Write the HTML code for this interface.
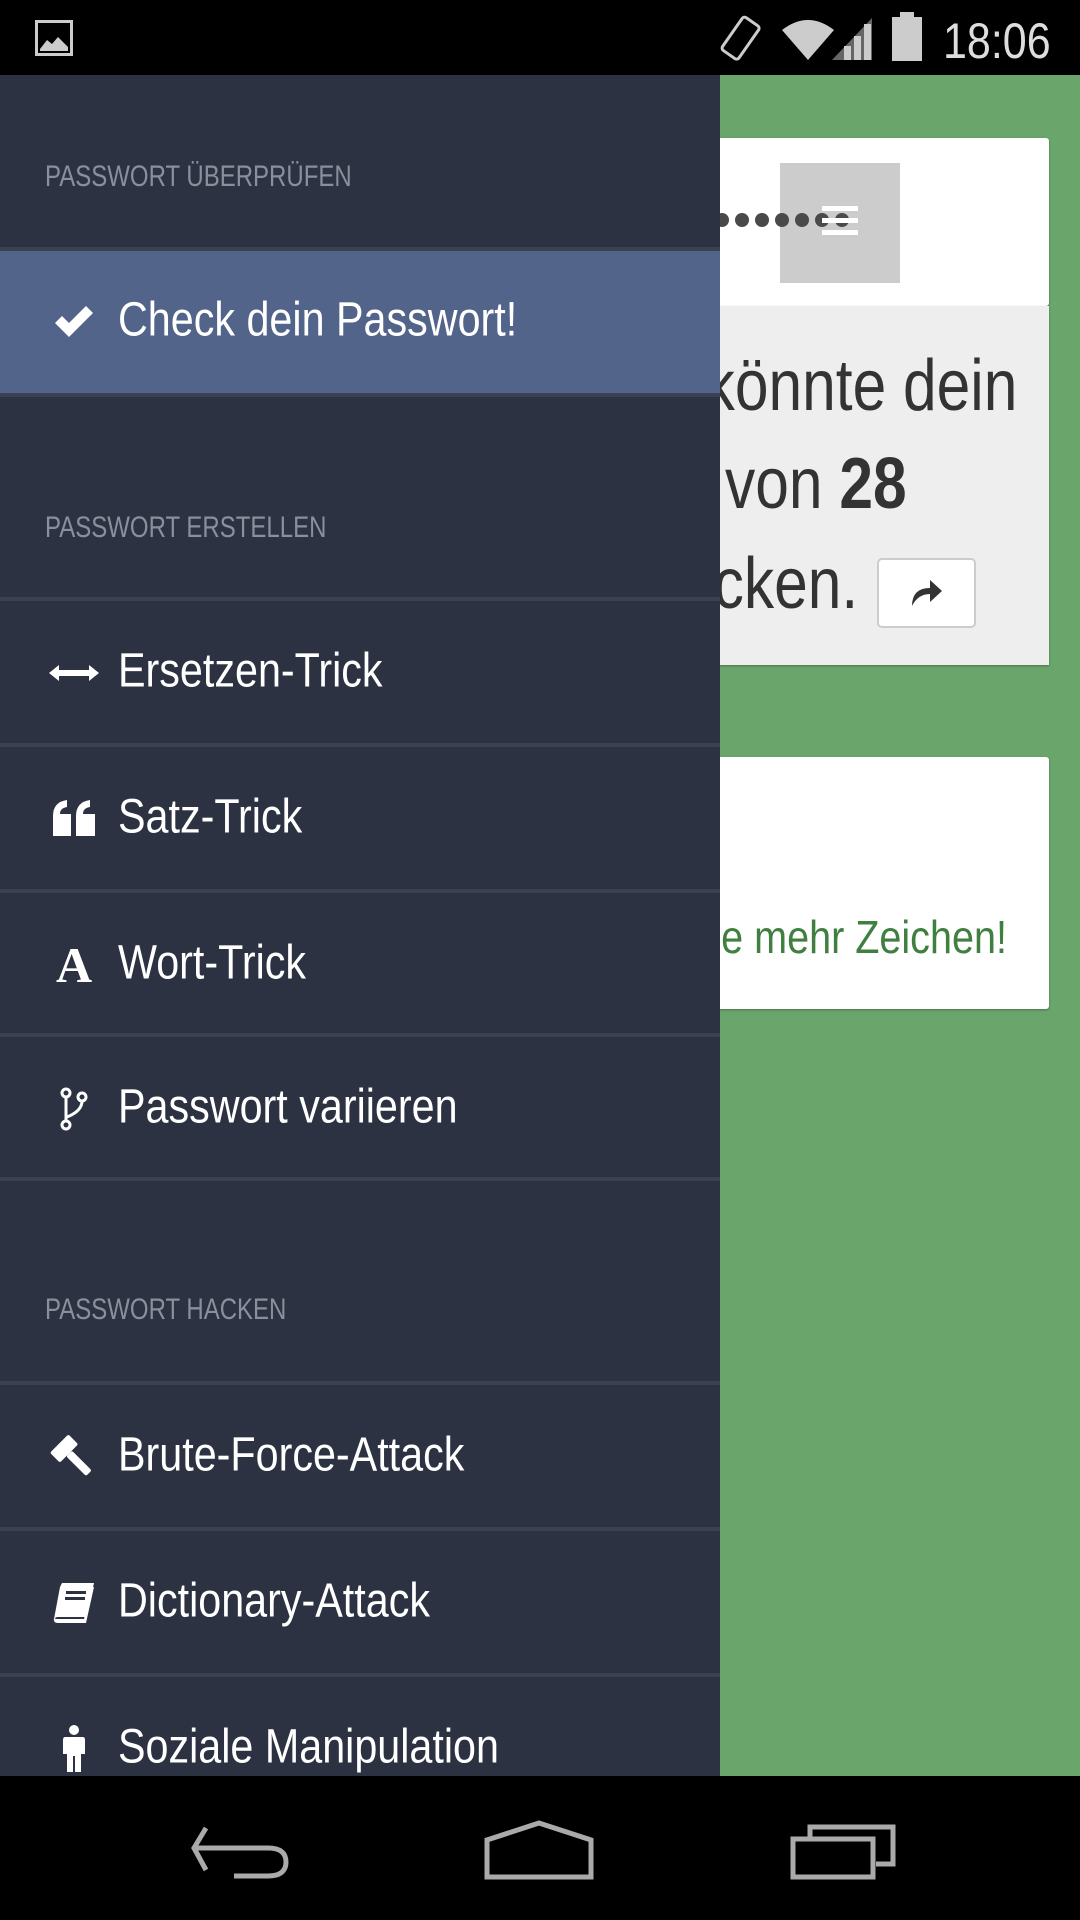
<!DOCTYPE html>
<html><head><meta charset="utf-8"><style>
*{margin:0;padding:0;box-sizing:border-box}
body{width:1080px;height:1920px;position:relative;overflow:hidden;background:#6aa56b;font-family:"Liberation Sans",sans-serif}
.abs{position:absolute}
#status{left:0;top:0;width:1080px;height:75px;background:#000}
#nav{left:0;top:1776px;width:1080px;height:144px;background:#000}
#drawer{left:0;top:75px;width:720px;height:1701px;background:#2d3242;z-index:5;overflow:hidden}
.hdr{position:absolute;left:45px;color:#8a8f9c;font-size:30px;line-height:1;transform:scaleX(.8);transform-origin:left;white-space:nowrap}
.line{position:absolute;left:0;width:720px;height:4px;background:#3b4152}
.item{position:absolute;left:0;width:720px;height:143px;color:#fff;font-size:48px}
.item .t{position:absolute;left:118px;top:50%;transform:translateY(-54%) scaleX(.86);transform-origin:left center;white-space:nowrap}
.item .ic{position:absolute;left:48px;width:52px;top:50%;transform:translateY(-50%);display:flex;justify-content:center;align-items:center}
.big{font-size:72px;color:#333;white-space:nowrap;position:absolute;transform:scaleX(.84)}
</style></head><body>
<div id="status" class="abs">
 <svg class="abs" style="left:35px;top:20px" width="38" height="36" viewBox="0 0 38 36"><rect x="1.5" y="1.5" width="35" height="33" fill="none" stroke="#ccc" stroke-width="3"/><path d="M5 29 L12 20 L17 24 L23 17 L33 27 L33 31 L5 31Z" fill="#ccc"/></svg>
 <svg class="abs" style="left:716px;top:14px" width="48" height="50" viewBox="0 0 48 50"><g transform="rotate(35 24 25)"><rect x="14" y="4" width="20" height="40" rx="3" fill="none" stroke="#ccc" stroke-width="3"/></g></svg>
 <svg class="abs" style="left:780px;top:16px" width="92" height="46" viewBox="0 0 92 46"><path d="M2 14 Q28 -6 54 14 L28 44Z" fill="#ccc"/><path d="M92 2 L92 44 L52 44Z" fill="#666"/><rect x="74" y="20" width="7" height="24" fill="#ccc"/><rect x="64" y="30" width="7" height="14" fill="#ccc"/><rect x="84" y="8" width="7" height="36" fill="#ccc"/></svg>
 <svg class="abs" style="left:890px;top:12px" width="34" height="50" viewBox="0 0 34 50"><rect x="10" y="0" width="14" height="6" fill="#ccc"/><rect x="2" y="5" width="30" height="44" fill="#ccc"/></svg>
 <div class="abs" style="left:943px;top:12px;color:#ddd;font-size:50px;transform:scaleX(.86);transform-origin:left">18:06</div>
</div>

<div class="abs" style="left:700px;top:138px;width:349px;height:168px;background:#fff;border-radius:3px;box-shadow:0 1px 2px rgba(0,0,0,.3)"></div>
<div class="abs" style="left:780px;top:163px;width:120px;height:120px;background:#cccccc"></div>
<svg class="abs" style="left:700px;top:210px" width="160" height="20" viewBox="0 0 160 20"><g fill="#4a4a4a"><circle cx="22" cy="10" r="7"/><circle cx="42" cy="10" r="7"/><circle cx="62" cy="10" r="7"/><circle cx="82" cy="10" r="7"/><circle cx="102" cy="10" r="7"/><circle cx="122" cy="10" r="7"/><circle cx="142" cy="10" r="7"/></g></svg>
<div class="abs" style="left:822px;top:206px;width:36px;height:5px;background:#fff"></div>
<div class="abs" style="left:822px;top:218px;width:36px;height:5px;background:#fff"></div>
<div class="abs" style="left:822px;top:230px;width:36px;height:5px;background:#fff"></div>
<div class="abs" style="left:700px;top:306px;width:349px;height:359px;background:#eeeeee;box-shadow:0 1px 2px rgba(0,0,0,.3)"></div>
<div class="big" style="right:63px;top:345px;transform-origin:right">Hacker könnte dein</div>
<div class="big" style="left:725px;top:443px;transform-origin:left">von <b>28</b></div>
<div class="big" style="right:222px;top:543px;transform-origin:right">knacken.</div>
<div class="abs" style="left:877px;top:558px;width:99px;height:70px;background:#fff;border:2px solid #ccc;border-radius:5px"></div>
<svg class="abs" style="left:908px;top:576px" width="38" height="34" viewBox="0 0 38 34"><path d="M4 30 Q4 12 22 12 L22 4 L34 15 L22 26 L22 18 Q10 18 4 30Z" fill="#333"/></svg>
<div class="abs" style="left:700px;top:757px;width:349px;height:252px;background:#fff;border-radius:3px;box-shadow:0 1px 2px rgba(0,0,0,.3)"></div>
<div class="abs" style="right:73px;top:910px;font-size:46px;color:#3f7f3f;white-space:nowrap;transform:scaleX(.86);transform-origin:right">Nutze mehr Zeichen!</div>

<div id="drawer" class="abs">
 <div class="hdr" style="top:87px">PASSWORT ÜBERPRÜFEN</div>
 <div class="line" style="top:172px"></div>
 <div class="item" style="top:176px;height:142px;background:#52648a">
  <span class="ic"><svg width="44" height="36" viewBox="0 0 44 36"><path d="M3 19 L10 12 L17 19 L34 2 L41 9 L17 33Z" fill="#fff"/></svg></span>
  <span class="t">Check dein Passwort!</span></div>
 <div class="line" style="top:318px"></div>
 <div class="hdr" style="top:438px">PASSWORT ERSTELLEN</div>
 <div class="line" style="top:522px"></div>
 <div class="item" style="top:526px">
  <span class="ic"><svg width="50" height="20" viewBox="0 0 50 20"><path d="M0 10 L10 2 L10 7 L40 7 L40 2 L50 10 L40 18 L40 13 L10 13 L10 18Z" fill="#fff"/></svg></span>
  <span class="t">Ersetzen-Trick</span></div>
 <div class="line" style="top:668px"></div>
 <div class="item" style="top:672px">
  <span class="ic"><svg width="46" height="38" viewBox="0 0 46 38"><path d="M2 16 Q2 2 16 0 L16 7 Q9 8 9 14 L20 14 L20 36 L2 36Z M25 16 Q25 2 39 0 L39 7 Q32 8 32 14 L44 14 L44 36 L25 36Z" fill="#fff"/></svg></span>
  <span class="t">Satz-Trick</span></div>
 <div class="line" style="top:814px"></div>
 <div class="item" style="top:818px">
  <span class="ic" style="font-family:'Liberation Serif',serif;font-size:50px;font-weight:bold;color:#fff">A</span>
  <span class="t">Wort-Trick</span></div>
 <div class="line" style="top:958px"></div>
 <div class="item" style="top:962px">
  <span class="ic"><svg width="30" height="44" viewBox="0 0 30 44"><circle cx="7" cy="6" r="4" fill="none" stroke="#fff" stroke-width="3"/><circle cx="23" cy="10" r="4" fill="none" stroke="#fff" stroke-width="3"/><circle cx="7" cy="38" r="4" fill="none" stroke="#fff" stroke-width="3"/><path d="M7 10 L7 34 M23 14 Q23 24 8 30" fill="none" stroke="#fff" stroke-width="3"/></svg></span>
  <span class="t">Passwort variieren</span></div>
 <div class="line" style="top:1102px"></div>
 <div class="hdr" style="top:1220px">PASSWORT HACKEN</div>
 <div class="line" style="top:1306px"></div>
 <div class="item" style="top:1310px">
  <span class="ic"><svg width="48" height="48" viewBox="0 0 48 48"><g transform="rotate(-45 24 24)"><rect x="10" y="4" width="26" height="14" rx="2" fill="#fff"/><rect x="19" y="18" width="8" height="28" rx="2" fill="#fff"/></g></svg></span>
  <span class="t">Brute-Force-Attack</span></div>
 <div class="line" style="top:1452px"></div>
 <div class="item" style="top:1456px">
  <span class="ic"><svg width="44" height="44" viewBox="0 0 44 44"><path d="M10 2 L42 2 L34 36 L6 36 Q2 36 2 40 L2 38 L8 6Z" fill="#fff"/><path d="M4 38 L32 38 L40 6 L42 6 L34 42 L6 42 Q1 42 2 37Z" fill="#fff"/><rect x="14" y="10" width="20" height="3" fill="#2d3242"/><rect x="13" y="16" width="20" height="3" fill="#2d3242"/></svg></span>
  <span class="t">Dictionary-Attack</span></div>
 <div class="line" style="top:1598px"></div>
 <div class="item" style="top:1602px">
  <span class="ic"><svg width="26" height="50" viewBox="0 0 26 50"><circle cx="13" cy="6" r="5" fill="#fff"/><path d="M4 13 L22 13 Q24 13 24 16 L24 30 L20 30 L20 48 L14 48 L14 32 L12 32 L12 48 L6 48 L6 30 L2 30 L2 16 Q2 13 4 13Z" fill="#fff"/></svg></span>
  <span class="t">Soziale Manipulation</span></div>
</div>

<div id="nav" class="abs">
 <svg class="abs" style="left:188px;top:48px" width="104" height="56" viewBox="0 0 104 56"><path d="M18 4 L6 24 L18 46 M6 24 L80 24 Q98 24 98 38 Q98 52 80 52 L46 52" fill="none" stroke="#aaa" stroke-width="5"/></svg>
 <svg class="abs" style="left:484px;top:44px" width="110" height="60" viewBox="0 0 110 60"><path d="M3 57 L3 20 L55 3 L107 20 L107 57Z" fill="none" stroke="#aaa" stroke-width="5"/></svg>
 <svg class="abs" style="left:790px;top:48px" width="106" height="56" viewBox="0 0 106 56"><rect x="3" y="15" width="80" height="38" fill="none" stroke="#aaa" stroke-width="5"/><path d="M20 13 L20 3 L103 3 L103 40 L86 40" fill="none" stroke="#aaa" stroke-width="5"/></svg>
</div>
</body></html>
